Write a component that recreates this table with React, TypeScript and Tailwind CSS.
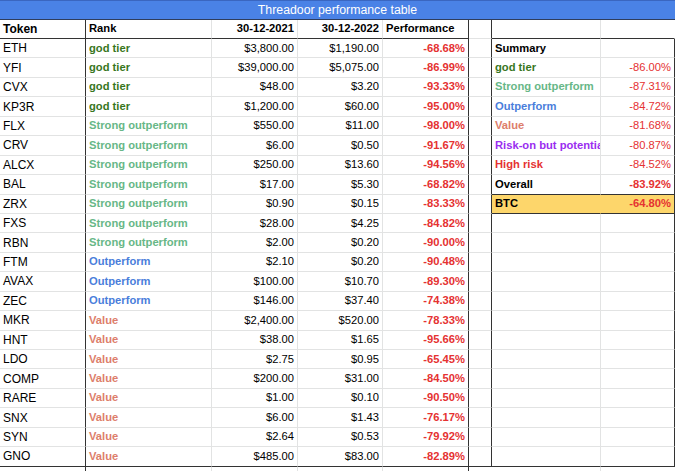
import React from "react";

type Row = {
  token: string;
  rank: string;
  a: string;
  b: string;
  p: string;
};

const rankColor: Record<string, string> = {
  "god tier": "text-[#38761d]",
  "Strong outperform": "text-[#67b787]",
  Outperform: "text-[#4a7edb]",
  Value: "text-[#dd7e6b]",
};

const rows: Row[] = [
  { token: "ETH", rank: "god tier", a: "$3,800.00", b: "$1,190.00", p: "-68.68%" },
  { token: "YFI", rank: "god tier", a: "$39,000.00", b: "$5,075.00", p: "-86.99%" },
  { token: "CVX", rank: "god tier", a: "$48.00", b: "$3.20", p: "-93.33%" },
  { token: "KP3R", rank: "god tier", a: "$1,200.00", b: "$60.00", p: "-95.00%" },
  { token: "FLX", rank: "Strong outperform", a: "$550.00", b: "$11.00", p: "-98.00%" },
  { token: "CRV", rank: "Strong outperform", a: "$6.00", b: "$0.50", p: "-91.67%" },
  { token: "ALCX", rank: "Strong outperform", a: "$250.00", b: "$13.60", p: "-94.56%" },
  { token: "BAL", rank: "Strong outperform", a: "$17.00", b: "$5.30", p: "-68.82%" },
  { token: "ZRX", rank: "Strong outperform", a: "$0.90", b: "$0.15", p: "-83.33%" },
  { token: "FXS", rank: "Strong outperform", a: "$28.00", b: "$4.25", p: "-84.82%" },
  { token: "RBN", rank: "Strong outperform", a: "$2.00", b: "$0.20", p: "-90.00%" },
  { token: "FTM", rank: "Outperform", a: "$2.10", b: "$0.20", p: "-90.48%" },
  { token: "AVAX", rank: "Outperform", a: "$100.00", b: "$10.70", p: "-89.30%" },
  { token: "ZEC", rank: "Outperform", a: "$146.00", b: "$37.40", p: "-74.38%" },
  { token: "MKR", rank: "Value", a: "$2,400.00", b: "$520.00", p: "-78.33%" },
  { token: "HNT", rank: "Value", a: "$38.00", b: "$1.65", p: "-95.66%" },
  { token: "LDO", rank: "Value", a: "$2.75", b: "$0.95", p: "-65.45%" },
  { token: "COMP", rank: "Value", a: "$200.00", b: "$31.00", p: "-84.50%" },
  { token: "RARE", rank: "Value", a: "$1.00", b: "$0.10", p: "-90.50%" },
  { token: "SNX", rank: "Value", a: "$6.00", b: "$1.43", p: "-76.17%" },
  { token: "SYN", rank: "Value", a: "$2.64", b: "$0.53", p: "-79.92%" },
  { token: "GNO", rank: "Value", a: "$485.00", b: "$83.00", p: "-82.89%" },
];

type Sum = { label: string; value: string; color: string; bold?: boolean; btc?: boolean };

const summary: Sum[] = [
  { label: "Summary", value: "", color: "text-black" },
  { label: "god tier", value: "-86.00%", color: "text-[#38761d]" },
  { label: "Strong outperform", value: "-87.31%", color: "text-[#67b787]" },
  { label: "Outperform", value: "-84.72%", color: "text-[#4a7edb]" },
  { label: "Value", value: "-81.68%", color: "text-[#dd7e6b]" },
  { label: "Risk-on but potential", value: "-80.87%", color: "text-[#9a2df0]" },
  { label: "High risk", value: "-84.52%", color: "text-[#e53232]" },
  { label: "Overall", value: "-83.92%", color: "text-black", bold: true },
  { label: "BTC", value: "-64.80%", color: "text-black", bold: true, btc: true },
];

const grid =
  "grid grid-cols-[86px_126px_86px_85px_86px_23px_109px_74px] w-[675px]";

function Cell({
  className,
  children,
}: {
  className: string;
  children?: React.ReactNode;
}) {
  return (
    <div
      className={
        "flex items-center overflow-hidden whitespace-nowrap px-[3px] border-b border-r " +
        className
      }
    >
      {children}
    </div>
  );
}

export default function App() {
  return (
    <div
      className="w-[680px] h-[471px] overflow-hidden bg-white text-black text-[11.2px] leading-none"
      style={{ fontFamily: '"Liberation Sans", Arial, sans-serif' }}
    >
      {/* Title bar */}
      <div className="w-[675px] h-[20px] flex items-center justify-center bg-[#4a82e6] border-t border-t-[#3a66c0] border-b border-b-[#2f3d5c] text-white text-[12.3px]">
        Threadoor performance table
      </div>

      {/* Header row */}
      <div className={grid + " h-[19px]"}>
        <Cell className="text-[12px] font-bold border-r-[#333] border-b-[#333]">Token</Cell>
        <Cell className="font-bold border-r-[#e2e3e3] border-b-[#333]">Rank</Cell>
        <Cell className="font-bold justify-end border-r-[#e2e3e3] border-b-[#333]">30-12-2021</Cell>
        <Cell className="font-bold justify-end border-r-[#e2e3e3] border-b-[#333]">30-12-2022</Cell>
        <Cell className="font-bold border-r-[#333] border-b-[#333]">Performance</Cell>
        <Cell className="border-r-[#333] border-b-[#e2e3e3]" />
        <Cell className="border-r-[#e2e3e3] border-b-[#333]" />
        <Cell className="border-r-transparent border-b-[#333]" />
      </div>

      {/* Data rows */}
      {rows.map((r, i) => {
        const s = summary[i];
        const last = i === rows.length - 1;
        const bb = last ? "border-b-[#333]" : "border-b-[#e2e3e3]";
        const sumB =
          last || i === 7 || i === 8 ? "border-b-[#333]" : "border-b-[#e2e3e3]";
        const btc = s?.btc;
        return (
          <div key={r.token} className={grid + " h-[19.45px]"}>
            <Cell className={"text-[12px] border-r-[#333] " + bb}>{r.token}</Cell>
            <Cell className={"font-bold border-r-[#e2e3e3] " + bb + " " + rankColor[r.rank]}>
              {r.rank}
            </Cell>
            <Cell className={"justify-end border-r-[#e2e3e3] " + bb}>{r.a}</Cell>
            <Cell className={"justify-end border-r-[#e2e3e3] " + bb}>{r.b}</Cell>
            <Cell className={"justify-end font-bold text-[#e53232] border-r-[#333] " + bb}>
              {r.p}
            </Cell>
            <Cell className={"border-r-[#333] " + bb} />
            <Cell
              className={
                "font-bold " +
                (s ? s.color : "") +
                " " +
                sumB +
                (btc ? " bg-[#fdd66b] border-r-[#fdd66b]" : " border-r-[#e2e3e3]")
              }
            >
              {s?.label}
            </Cell>
            <Cell
              className={
                "justify-end text-[#e53232] border-r-[#333] " +
                sumB +
                (s?.bold ? " font-bold" : "") +
                (btc ? " bg-[#fdd66b]" : "")
              }
            >
              {s?.value}
            </Cell>
          </div>
        );
      })}

      {/* Partial row below */}
      <div className={grid + " h-[8px]"}>
        <Cell className="border-r-[#333] border-b-transparent" />
        <Cell className="border-r-[#e2e3e3] border-b-transparent" />
        <Cell className="border-r-[#e2e3e3] border-b-transparent" />
        <Cell className="border-r-[#e2e3e3] border-b-transparent" />
        <Cell className="border-r-[#333] border-b-transparent" />
        <Cell className="border-r-transparent border-b-transparent" />
        <Cell className="border-r-[#e2e3e3] border-b-transparent" />
        <Cell className="border-r-transparent border-b-transparent" />
      </div>
    </div>
  );
}
